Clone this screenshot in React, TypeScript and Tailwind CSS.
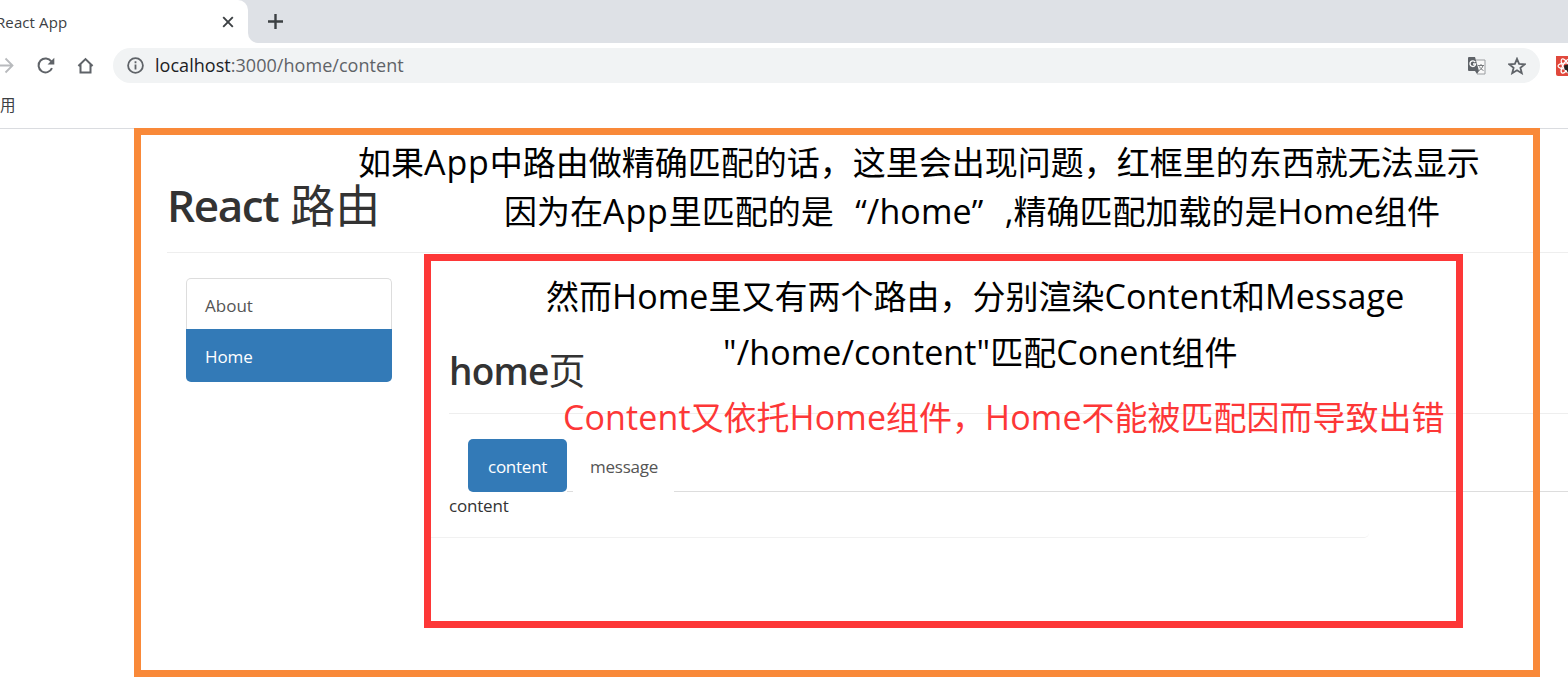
import React from "react";

const Note = ({ className, text }: { className: string; text: string }) => (
  <p className={`absolute whitespace-nowrap text-[33px] leading-[48px] ${className}`}>
    {text.split(/([!-~]+|[“”])/).map((part, i) => {
      if (part === "“") return <span key={i} className="inline-block w-[33px] text-right">“</span>;
      if (part === "”") return <span key={i} className="inline-block w-[33px]">”</span>;
      if (part === "App") return <span key={i} className="text-[34px] leading-[40px] tracking-[0.9px]">App</span>;
      return /^[!-~]/.test(part) ? <span key={i} className="text-[34px] leading-[40px] tracking-[0.1px]">{part}</span> : part;
    })}
  </p>
);

export default function App() {
  return (
    <div className="relative h-[696px] w-[1568px] overflow-hidden bg-white font-['Open_Sans','Noto_Sans_CJK_SC',sans-serif] text-[#333]">
      <header className="flex h-[129px] flex-col border-b border-[#dadce0]">
        <div className="flex h-[43px] bg-[#dee1e6]">
          <div className="flex h-[43px] w-[248px] items-center justify-between rounded-tr-[10px] bg-white pr-[14px]">
            <span className="-ml-[4px] pt-px text-[15px] tracking-[0.1px] text-[#3c4043]">React App</span>
            <svg className="size-3" viewBox="0 0 12 12" stroke="#3c4043" strokeWidth="1.9"><path d="M1.2 1.2l9.6 9.6M10.8 1.2L1.2 10.8" /></svg>
          </div>
          <div className="flex-1 bg-white">
            <div className="flex h-[43px] items-center rounded-bl-[10px] bg-[#dee1e6] pl-5">
              <svg className="size-[15px]" viewBox="0 0 15 15" stroke="#3c4043" strokeWidth="2.4"><path d="M7.5 0v15M0 7.5h15" /></svg>
            </div>
          </div>
        </div>
        <div className="flex h-[45px] items-center">
          <svg className="h-[18px] w-[14px] shrink-0" viewBox="0 0 14 18" fill="none" stroke="#b8babd" strokeWidth="1.8"><path d="M-3 8.5h16M5.5 1.5l7 7-7 7" /></svg>
          <svg className="ml-[22px] size-5 shrink-0" viewBox="0 0 20 20" fill="none" stroke="#5f6368" strokeWidth="2"><path d="M16 12.2A7 7 0 1 1 15.3 5.4" /><path d="M18.3 1.8v6.7h-6.7z" fill="#5f6368" stroke="none" /></svg>
          <svg className="ml-[21px] size-[18px] shrink-0" viewBox="0 0 18 18" fill="none" stroke="#5f6368" strokeWidth="2"><path d="M1.4 9L8.5 2.1 15.6 9M3.5 7.5v8h10v-8" /></svg>
          <div className="ml-[18px] flex h-[35px] w-[1427px] shrink-0 items-center rounded-full bg-[#f1f3f4] pl-[14px] pr-[14px]">
            <svg className="size-[17px]" viewBox="0 0 17 17" fill="none" stroke="#5f6368" strokeWidth="1.8"><circle cx="8.5" cy="8.5" r="7.4" /><path d="M8.5 7.6v5M8.5 4.3v2" /></svg>
            <span className="ml-[11px] flex-1 text-[18px] tracking-[0.04px] text-[#5f6368]"><span className="text-[#202124]">localhost</span>:3000/home/content</span>
            <svg className="size-[18px]" viewBox="0 0 18 18"><path d="M8 3h9v14H9" fill="#f8f8f8" stroke="#9a9da0" /><path d="M1 0h6l4 14H1a1 1 0 0 1-1-1V1a1 1 0 0 1 1-1z" fill="#5f6368" /><path d="M7.2 5.2A2.8 2.8 0 1 0 7.6 7H5" fill="none" stroke="#fff" strokeWidth="1.4" /><path d="M10 8.5h6M13 7v1.5M15 8.5c-.5 2-2 4-4 5M11.5 9.5c.7 1.6 2 3 4 4" fill="none" stroke="#777a7d" /><path d="M7 14h4l-2 3z" fill="#5f6368" /></svg>
            <svg className="ml-[22px] size-[18px]" viewBox="0 0 18 18" fill="none" stroke="#5f6368" strokeWidth="1.8"><path d="M9 1.8l2.1 5.1 5.6.4-4.3 3.5 1.4 5.4L9 13.3l-4.8 2.9 1.4-5.4-4.3-3.5 5.6-.4z" /></svg>
          </div>
          <svg className="ml-4 h-[20px] w-[12px] shrink-0" viewBox="0 0 12 20"><path d="M0 0h20v20H2a2 2 0 0 1-2-2z" fill="#e0483c" /><g fill="none" stroke="#fff" strokeWidth="1.2"><ellipse cx="10" cy="10" rx="8" ry="3" /><ellipse cx="10" cy="10" rx="8" ry="3" transform="rotate(60 10 10)" /><ellipse cx="10" cy="10" rx="8" ry="3" transform="rotate(120 10 10)" /></g><path d="M8 9.5l4-1v9l-1-3-2.500-1z" fill="#222" /></svg>
        </div>
        <div className="flex h-[36px] items-center"><span className="text-[15.5px] text-[#3c4043]">用</span></div>
      </header>

      <main className="ml-[167px] w-[1401px]">
        <h1 className="flex h-[124px] items-center border-b border-[#eee] pt-[29px] text-[44px] font-semibold"><span className="tracking-[-1.4px]">React</span><span className="ml-[12px] pt-px text-[45px] font-normal">路由</span></h1>
        <div className="flex">
          <nav className="ml-[19px] mt-[25px] w-[206px] text-[17px] leading-[52px]">
            <div className="h-[51px] rounded-t-[5px] border border-b-0 border-[#ddd] pl-[18px] pt-px text-[#555]">About</div>
            <div className="h-[53px] rounded-b-[5px] bg-[#337ab7] pl-[19px] pt-[2px] tracking-[-0.1px] text-white">Home</div>
          </nav>
          <section className="ml-[39px] h-[285px] w-[938px] rounded-br-[5px] border-b border-[#f1f1f1] pl-[18px]">
            <div className="w-[1119px]">
              <h2 className="flex h-[161px] items-center border-b border-[#eee] pt-[76px] text-[37px] font-semibold tracking-[-0.8px]">home<span className="font-normal">页</span></h2>
              <div className="ml-[19px] mt-[25px] flex h-[53px] text-[17px] leading-[55px] tracking-[-0.25px]">
                <div className="w-[99px] rounded-[5px] bg-[#337ab7] pl-5 text-white">content</div>
                <div className="h-[53px] w-[6px] border-b border-[#ddd]" />
                <div className="w-[101px] pl-[17px] text-[#555]">message</div>
                <div className="flex-1 border-b border-[#ddd]" />
              </div>
              <div className="text-[17px] leading-[28px] tracking-[-0.2px]">content</div>
            </div>
          </section>
        </div>
      </main>

      <div className="absolute left-[134px] top-[128px] h-[549px] w-[1406px] border-[7px] border-[#f98939]" />
      <div className="absolute left-[424px] top-[254px] h-[374px] w-[1039px] border-[7px] border-[#fd3737]" />
      <Note className="left-[358px] top-[139px] text-black" text="如果App中路由做精确匹配的话，这里会出现问题，红框里的东西就无法显示" />
      <Note className="left-[504px] top-[188px] text-black" text="因为在App里匹配的是“/home”,精确匹配加载的是Home组件" />
      <Note className="left-[546px] top-[273px] text-black" text="然而Home里又有两个路由，分别渲染Content和Message" />
      <Note className="left-[723px] top-[329px] text-black" text={'"/home/content"匹配Conent组件'} />
      <Note className="left-[563px] top-[394px] text-[#fd3737]" text="Content又依托Home组件，Home不能被匹配因而导致出错" />
    </div>
  );
}
